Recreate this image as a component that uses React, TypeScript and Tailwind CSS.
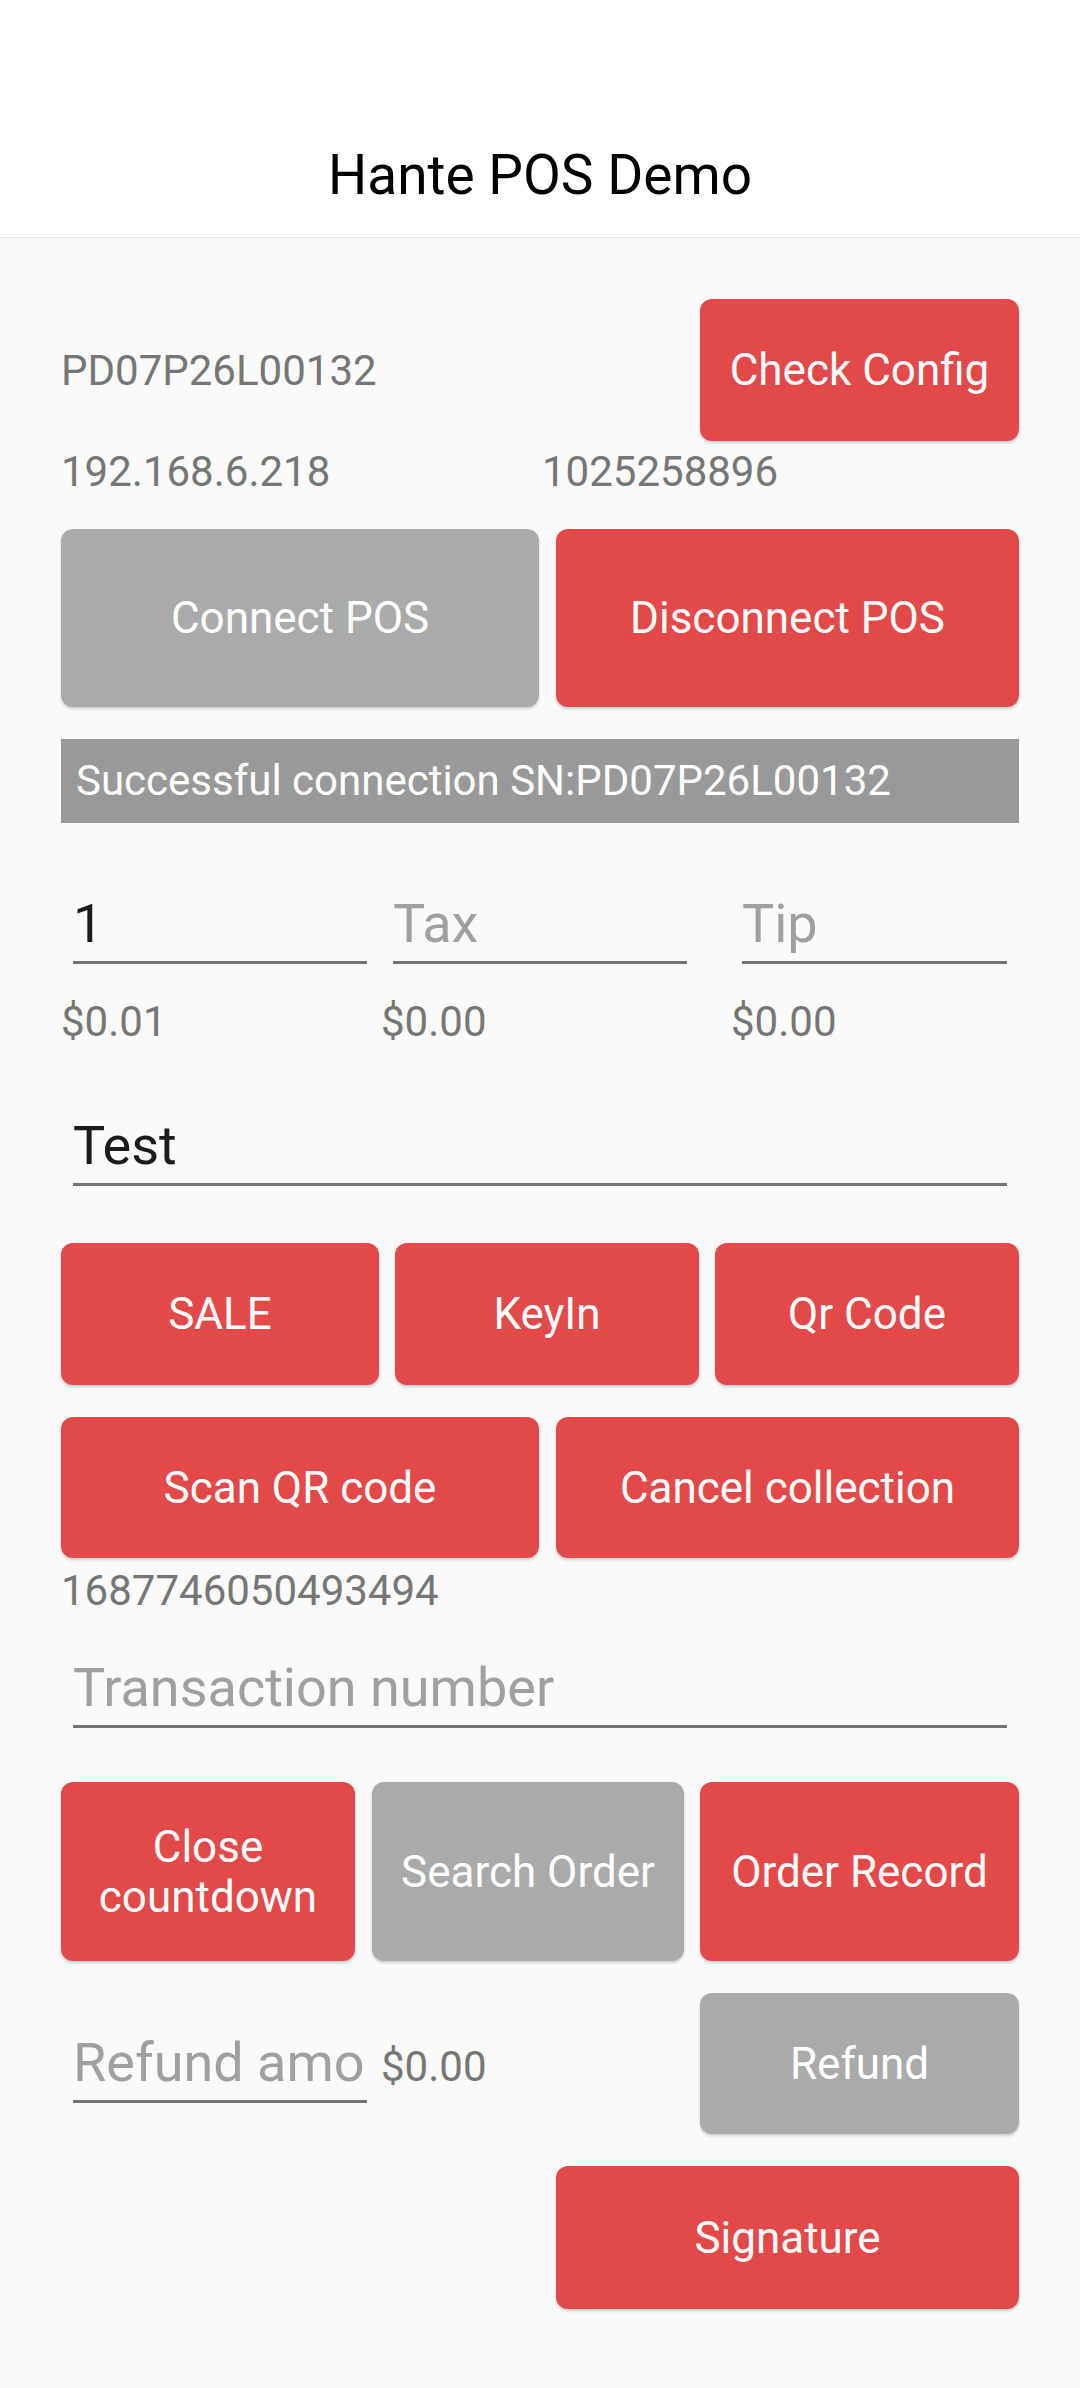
import { FC, ReactNode } from "react";

const RED = "bg-[#e4494a]";
const GRAY = "bg-[#aaaaaa]";

const Btn: FC<{ className?: string; gray?: boolean; children: ReactNode }> = ({
  className = "",
  gray,
  children,
}) => (
  <button
    type="button"
    className={`${gray ? GRAY : RED} ${className} flex items-center justify-center rounded-[12px] text-center text-[44px] leading-[50px] font-normal text-white shadow-[0_2px_3px_rgba(0,0,0,0.18)]`}
  >
    {children}
  </button>
);

const Field: FC<{ className?: string; value?: string; placeholder?: string }> = ({
  className = "",
  value,
  placeholder,
}) => (
  <div className={`${className} border-b-[3px] border-[#757575] pb-[7px]`}>
    <input
      type="text"
      defaultValue={value}
      placeholder={placeholder}
      className="block h-[60px] w-full bg-transparent p-0 text-[54px] leading-[60px] text-[#1c1c1c] outline-none placeholder:text-[#a0a0a0]"
    />
  </div>
);

const Muted: FC<{ className?: string; children: ReactNode }> = ({ className = "", children }) => (
  <div className={`${className} text-[42px] leading-[50px] text-[#767676]`}>{children}</div>
);

export default function App() {
  return (
    <div className="min-h-[2388px] w-[1080px] bg-[#fafafa] font-['Roboto','Noto_Sans',sans-serif]">
      <header className="h-[238px] border-b border-[#e0e0e0] bg-white pt-[144px] text-center text-[55px] leading-[62px] text-black">
        Hante POS Demo
      </header>

      <main className="px-[61px]">
        <div className="mt-[61px] flex items-center justify-between">
          <Muted className="mt-[2px]">PD07P26L00132</Muted>
          <Btn className="h-[142px] w-[319px]">Check Config</Btn>
        </div>

        <div className="mt-[6px] grid grid-cols-2">
          <Muted>192.168.6.218</Muted>
          <Muted className="pl-[2px]">1025258896</Muted>
        </div>

        <div className="mt-[32px] flex h-[178px] gap-[17px]">
          <Btn gray className="w-[478px]">
            Connect POS
          </Btn>
          <Btn className="flex-1">Disconnect POS</Btn>
        </div>

        <div className="mt-[32px] flex h-[84px] items-center bg-[#999999] pl-[15px] text-[42px] leading-[50px] text-white">
          Successful connection SN:PD07P26L00132
        </div>

        <div className="mt-[71px] flex">
          <div className="w-[320px]">
            <Field className="ml-[12px] w-[294px]" value="1" />
            <Muted className="mt-[33px]">$0.01</Muted>
          </div>
          <div className="w-[350px]">
            <Field className="ml-[12px] w-[294px]" placeholder="Tax" />
            <Muted className="mt-[33px]">$0.00</Muted>
          </div>
          <div className="flex-1">
            <Field className="ml-[11px] w-[265px]" placeholder="Tip" />
            <Muted className="mt-[33px]">$0.00</Muted>
          </div>
        </div>

        <Field className="ml-[12px] mt-[69px] w-[934px]" value="Test" />

        <div className="mt-[57px] flex h-[142px] gap-[16px]">
          <Btn className="w-[318px]">SALE</Btn>
          <Btn className="w-[304px]">KeyIn</Btn>
          <Btn className="flex-1">Qr Code</Btn>
        </div>

        <div className="mt-[32px] flex h-[141px] gap-[17px]">
          <Btn className="w-[478px]">Scan QR code</Btn>
          <Btn className="flex-1">Cancel collection</Btn>
        </div>

        <Muted className="mt-[8px]">1687746050493494</Muted>

        <Field className="ml-[12px] mt-[42px] w-[934px]" placeholder="Transaction number" />

        <div className="mt-[54px] flex h-[179px]">
          <Btn className="w-[294px]">
            Close
            <br />
            countdown
          </Btn>
          <Btn gray className="ml-[17px] w-[312px]">
            Search Order
          </Btn>
          <Btn className="ml-[16px] flex-1">Order Record</Btn>
        </div>

        <div className="mt-[32px] flex items-start justify-between">
          <div className="mt-[40px] flex items-baseline gap-[14px]">
            <Field className="ml-[12px] w-[294px]" placeholder="Refund amount" />
            <Muted>$0.00</Muted>
          </div>
          <Btn gray className="h-[141px] w-[319px]">
            Refund
          </Btn>
        </div>

        <div className="mt-[32px] flex justify-end">
          <Btn className="h-[143px] w-[463px]">Signature</Btn>
        </div>
      </main>
    </div>
  );
}
